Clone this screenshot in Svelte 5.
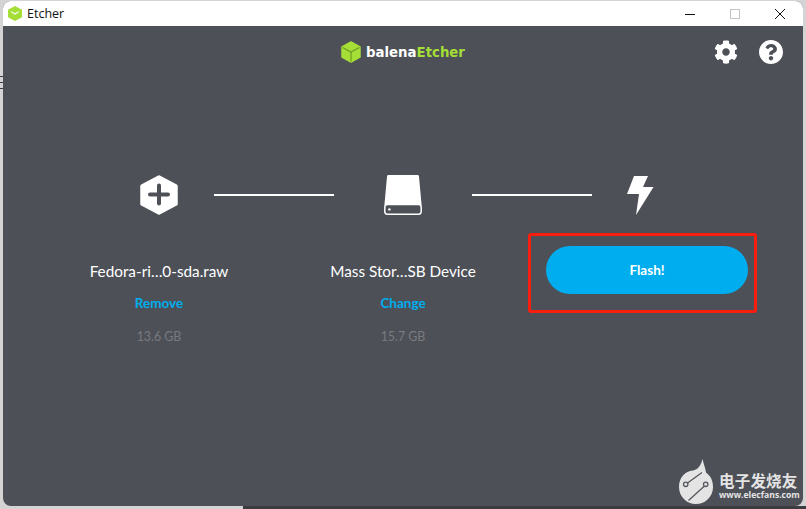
<script>
  const steps = [
    { name: 'Fedora-ri…0-sda.raw', action: 'Remove', size: '13.6 GB' },
    { name: 'Mass Stor…SB Device', action: 'Change', size: '15.7 GB' }
  ];
</script>

<div class="screen">
  <div class="behind">
    <span></span><span></span><span></span>
  </div>
  <div class="window">
    <div class="titlebar">
      <svg class="app-icon" viewBox="0 0 14 15" width="14" height="15">
        <polygon points="7,0 14,3.7 14,11.3 7,15 0,11.3 0,3.7" fill="#a5de37" />
        <polyline points="3.2,5.6 7,8 10.8,5.6" fill="none" stroke="#fff" stroke-width="1.1" />
      </svg>
      <span class="app-name">Etcher</span>
      <div class="controls">
        <svg viewBox="0 0 10 10" width="10" height="10"><path d="M0 5.5h10" stroke="#111" stroke-width="1" /></svg>
        <svg viewBox="0 0 10 10" width="10" height="10"><rect x=".5" y=".5" width="9" height="9" fill="none" stroke="#c4c4c4" /></svg>
        <svg viewBox="0 0 10 10" width="10" height="10"><path d="M0 0l10 10M10 0L0 10" stroke="#111" stroke-width="1" /></svg>
      </div>
    </div>

    <main>
      <header>
        <div class="logo">
          <svg viewBox="0 0 20 22" width="20" height="22">
            <polygon points="10,1 19,6 19,16 10,21 1,16 1,6" fill="#a5de37" stroke="#a5de37" stroke-width="1.5" stroke-linejoin="round" />
            <polyline points="1.5,6.5 10,11 18.5,6.5" fill="none" stroke="#6f9a22" stroke-width="1.2" />
            <path d="M10 11v9.5" stroke="#6f9a22" stroke-width="1.2" />
          </svg>
          <span class="wordmark">balena<b>Etcher</b></span>
        </div>
        <div class="tools">
          <svg viewBox="0 0 512 512" width="24" height="24"><path fill="#fff" d="M487.4 315.7l-42.6-24.6c4.3-23.2 4.3-47 0-70.2l42.6-24.6c4.9-2.8 7.1-8.6 5.5-14-11.1-35.6-30-67.8-54.7-94.6-3.8-4.1-10-5.1-14.8-2.3L380.8 110c-17.9-15.4-38.5-27.3-60.8-35.1V25.8c0-5.6-3.9-10.5-9.4-11.7-36.7-8.2-74.3-7.8-109.2 0-5.5 1.2-9.4 6.1-9.4 11.7V75c-22.2 7.9-42.8 19.8-60.8 35.1L88.7 85.5c-4.9-2.8-11-1.9-14.8 2.3-24.7 26.7-43.6 58.9-54.7 94.6-1.7 5.4.6 11.2 5.5 14L67.3 221c-4.3 23.2-4.3 47 0 70.2l-42.6 24.6c-4.9 2.8-7.1 8.6-5.5 14 11.1 35.6 30 67.8 54.7 94.6 3.8 4.1 10 5.1 14.8 2.3l42.6-24.6c17.9 15.4 38.5 27.3 60.8 35.1v49.2c0 5.6 3.9 10.5 9.4 11.7 36.7 8.2 74.3 7.8 109.2 0 5.5-1.2 9.4-6.1 9.4-11.7v-49.2c22.2-7.9 42.8-19.8 60.8-35.1l42.6 24.6c4.9 2.8 11 1.9 14.8-2.3 24.7-26.7 43.6-58.9 54.7-94.6 1.5-5.5-.7-11.3-5.6-14.1zM256 336c-44.1 0-80-35.9-80-80s35.9-80 80-80 80 35.9 80 80-35.9 80-80 80z" /></svg>
          <svg viewBox="8 8 496 496" width="24" height="24"><path fill="#fff" d="M504 256c0 136.997-111.043 248-248 248S8 392.997 8 256C8 119.083 119.043 8 256 8s248 111.083 248 248zM262.655 90c-54.497 0-89.255 22.957-116.549 63.758-3.536 5.286-2.353 12.415 2.715 16.258l34.699 26.31c5.205 3.947 12.621 3.008 16.665-2.122 17.864-22.658 30.113-35.797 57.303-35.797 20.429 0 45.698 13.148 45.698 32.958 0 14.976-12.363 22.667-32.534 33.976C247.128 238.528 216 254.941 216 296v4c0 6.627 5.373 12 12 12h56c6.627 0 12-5.373 12-12v-1.333c0-28.462 83.186-29.647 83.186-106.667 0-58.002-60.165-102-116.531-102zM256 338c-25.365 0-46 20.635-46 46 0 25.364 20.635 46 46 46s46-20.636 46-46c0-25.365-20.635-46-46-46z" /></svg>
        </div>
      </header>

      <div class="icons">
        <div class="slot first">
          <svg viewBox="0 0 38 40" width="38" height="40">
            <polygon points="19,2 36,11 36,29 19,38 2,29 2,11" fill="#fff" stroke="#fff" stroke-width="3.5" stroke-linejoin="round" />
            <path d="M10 19.5h18M19 10.5v18" stroke="#4d5057" stroke-width="4" stroke-linecap="round" />
          </svg>
        </div>
        <div class="line"></div>
        <div class="slot middle">
          <svg viewBox="0 0 38 40" width="38" height="40">
            <path fill="#fff" d="M4.5 0H33.5a1.5 1.5 0 0 1 1.5 1.4L37.6 30H.4L3 1.4A1.5 1.5 0 0 1 4.5 0z" />
            <rect x=".8" y="29.5" width="36.4" height="9.7" rx="2.6" fill="none" stroke="#fff" stroke-width="1.5" />
            <circle cx="5.4" cy="34.4" r="1.2" fill="#fff" />
          </svg>
        </div>
        <div class="line"></div>
        <div class="slot first bolt">
          <svg viewBox="0 0 27 39" width="27" height="39">
            <polygon points="7,0 21,0 16,11 26.5,11 9,39 12,18 0,18" fill="#fff" />
          </svg>
        </div>
      </div>

      <div class="steps">
        {#each steps as step}
          <div class="step">
            <div class="name">{step.name}</div>
            <div class="action">{step.action}</div>
            <div class="size">{step.size}</div>
          </div>
        {/each}
        <div class="highlight">
          <button>Flash!</button>
        </div>
      </div>

      <div class="watermark">
        <svg viewBox="0 0 36 47" width="36" height="47">
          <path fill="#e4e4e4" d="M23.5 1c1 5 3 9 3.5 13.5C32 18 34 23 34 29c0 9.5-7.5 17-17 17S0 38.5 0 29 6 13 14 12.5C19 12 22 7 23.5 1z" />
          <path d="M8.5 25L23 14.5M25.5 28L9.5 42.5" fill="none" stroke="#55585e" stroke-width="1.3" />
          <circle cx="6.7" cy="26.3" r="2.2" fill="#e4e4e4" stroke="#55585e" stroke-width="1.3" />
          <circle cx="26.7" cy="26.3" r="2.2" fill="#e4e4e4" stroke="#55585e" stroke-width="1.3" />
        </svg>
        <div class="mark-text">
          <div class="mark-cn">电子发烧友</div>
          <div class="mark-url">www.elecfans.com</div>
        </div>
      </div>
    </main>
  </div>
  <div class="bottom-strip"></div>
</div>

<style>
  :global(body) {
    margin: 0;
    background: #dcdcdc;
  }

  .screen {
    position: relative;
    width: 806px;
    height: 509px;
    box-sizing: border-box;
    padding-top: 1px;
    overflow: hidden;
    display: flex;
    flex-direction: column;
    background: #d4d4d4;
  }

  /* bits of whatever sits behind the window */
  .behind {
    position: absolute;
    left: 0;
    top: 76px;
    display: flex;
    flex-direction: column;
    gap: 5px;
  }

  .behind span {
    display: block;
    width: 3px;
    height: 1px;
    background: #3a3c42;
  }

  .window {
    width: 800px;
    height: 505px;
    margin-left: 3px;
    flex: none;
    border-radius: 8px;
    overflow: hidden;
    display: flex;
    flex-direction: column;
    background: #4d5057;
  }

  .bottom-strip {
    height: 3px;
    margin-left: 243px;
    background: #3b3c40;
  }

  .titlebar {
    height: 25px;
    flex: none;
    display: flex;
    align-items: center;
    background: #fff;
    padding-left: 5px;
  }

  .app-icon {
    margin-right: 5px;
  }

  .app-name {
    font: 12.5px "Open Sans", sans-serif;
    color: #111;
  }

  .controls {
    margin-left: auto;
    display: flex;
    gap: 35px;
    padding-right: 18px;
  }

  main {
    flex: 1;
    position: relative;
    font-family: Lato, sans-serif;
  }

  header {
    height: 52px;
    position: relative;
    display: flex;
    align-items: center;
    justify-content: center;
  }

  .logo {
    display: flex;
    align-items: center;
    gap: 5px;
  }

  .wordmark {
    font: 600 13.3px "DejaVu Sans", sans-serif;
    color: #fff;
  }

  .wordmark b {
    color: #a5de37;
    font-weight: 700;
  }

  .tools {
    position: absolute;
    top: 14px;
    right: 20px;
    display: flex;
    gap: 21px;
  }

  .icons {
    margin-top: 97px;
    display: flex;
    align-items: center;
    justify-content: center;
    height: 40px;
  }

  .slot {
    display: flex;
    justify-content: center;
  }

  .first {
    width: 110px;
  }

  .middle {
    width: 138px;
  }

  .bolt {
    box-sizing: border-box;
    padding-right: 13px;
  }

  .line {
    width: 120px;
    height: 2px;
    background: #fff;
  }

  .steps {
    display: grid;
    grid-template-columns: 244px 244px 244px;
    justify-content: center;
    margin-top: 18px;
  }

  .step {
    padding-top: 28px;
    display: flex;
    flex-direction: column;
    align-items: center;
  }

  .name {
    font-size: 15.3px;
    line-height: 20px;
    color: #fff;
  }

  .action {
    margin-top: 12px;
    font-size: 13.5px;
    font-weight: 700;
    line-height: 20px;
    color: #00aeef;
  }

  .size {
    margin-top: 14px;
    font-size: 12.4px;
    line-height: 20px;
    color: #787a80;
  }

  .highlight {
    box-sizing: border-box;
    width: 229px;
    height: 80px;
    margin-left: 3px;
    padding: 10px 6px 0 15px;
    border: 3px solid #fa1e0e;
    border-radius: 3px;
  }

  button {
    display: block;
    width: 202px;
    height: 48px;
    border: 0;
    border-radius: 24px;
    background: #00aeef;
    color: #fff;
    font: 700 13.5px Lato, sans-serif;
  }

  .watermark {
    position: absolute;
    right: 4px;
    bottom: 1px;
    display: flex;
    align-items: flex-end;
    gap: 4px;
  }

  .mark-text {
    width: 80px;
    padding-bottom: 5px;
    white-space: nowrap;
  }

  .mark-cn {
    height: 16px;
    margin-bottom: 3px;
    font: 700 15.5px/16px "Noto Sans CJK SC", sans-serif;
    color: #e4e4e4;
    letter-spacing: .2px;
  }

  .mark-url {
    font: 700 8.6px/9px "Open Sans", sans-serif;
    color: #e4e4e4;
  }
</style>
